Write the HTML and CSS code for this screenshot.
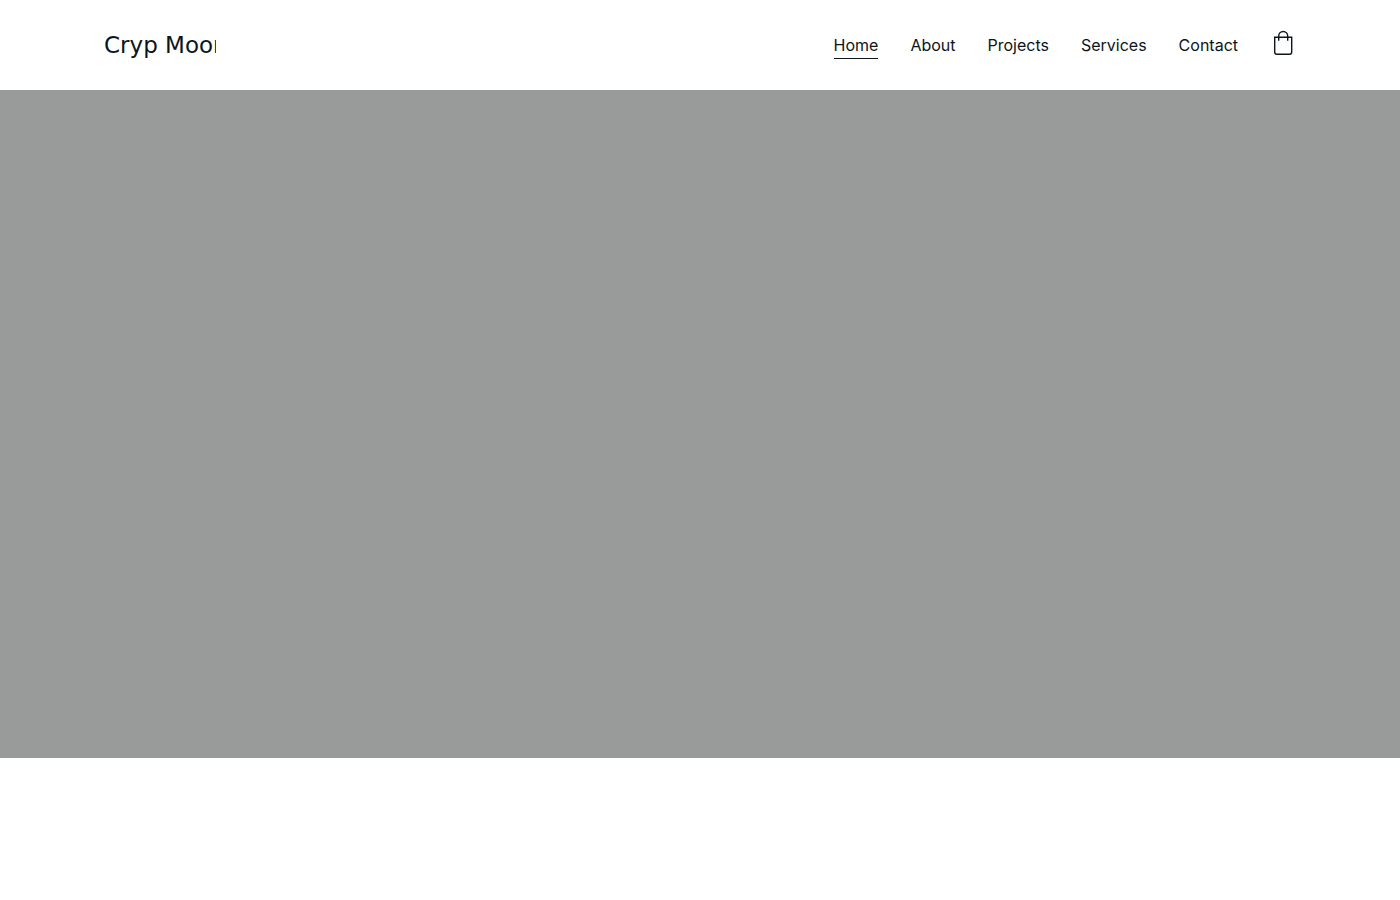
FILE: index.html
```html
<!DOCTYPE html>
<html lang="en">
<head>
<meta charset="utf-8">
<meta name="viewport" content="width=device-width, initial-scale=1">
<title>Cryp Moon</title>
<link rel="stylesheet" href="styles.css">
</head>
<body>
<header class="header">
  <a class="logo" href="#">Cryp Moon</a>
  <nav class="nav" aria-label="Main">
    <a class="nav-link nav-link-active" href="#" aria-current="page">Home</a>
    <a class="nav-link" href="#">About</a>
    <a class="nav-link" href="#">Projects</a>
    <a class="nav-link" href="#">Services</a>
    <a class="nav-link" href="#">Contact</a>
  </nav>
  <button class="cart" type="button" aria-label="Shopping bag">
    <svg width="20" height="26" viewBox="0 0 20 26" fill="none" stroke="currentColor" stroke-width="1.4" aria-hidden="true">
      <path d="M1.7 7.3H18.7V22A2.2 2.2 0 0 1 16.5 24.2H3.9A2.2 2.2 0 0 1 1.7 22Z"/>
      <path d="M5.7 10.8V6A4.5 4.5 0 0 1 14.7 6V10.8"/>
    </svg>
  </button>
</header>
<main>
  <section class="hero"></section>
</main>
</body>
</html>
```
FILE: styles.css
```css
* {
  box-sizing: border-box;
}

body {
  margin: 0;
  background: #fff;
  color: #0d141a;
  font-family: Inter, sans-serif;
  font-size: 16px;
}

.header {
  display: flex;
  align-items: center;
  max-width: 1224px;
  height: 90px;
  margin: 0 auto;
  padding: 0 16px;
}

.logo {
  width: 112px;
  margin-right: auto;
  overflow: hidden;
  color: inherit;
  font-family: "DejaVu Sans", sans-serif;
  font-size: 23px;
  line-height: 32px;
  text-decoration: none;
  white-space: nowrap;
}

.nav {
  display: flex;
  gap: 32px;
}

.nav-link {
  padding: 2px 0 1px;
  border-bottom: 1px solid transparent;
  color: inherit;
  line-height: 24px;
  text-decoration: none;
}

.nav-link-active {
  border-bottom-color: currentColor;
}

.cart {
  display: flex;
  margin: 0 3px 4px 35px;
  padding: 0;
  border: 0;
  background: none;
  color: inherit;
  cursor: pointer;
}

.hero {
  min-height: 668px;
  background: #999b9a;
}
```
